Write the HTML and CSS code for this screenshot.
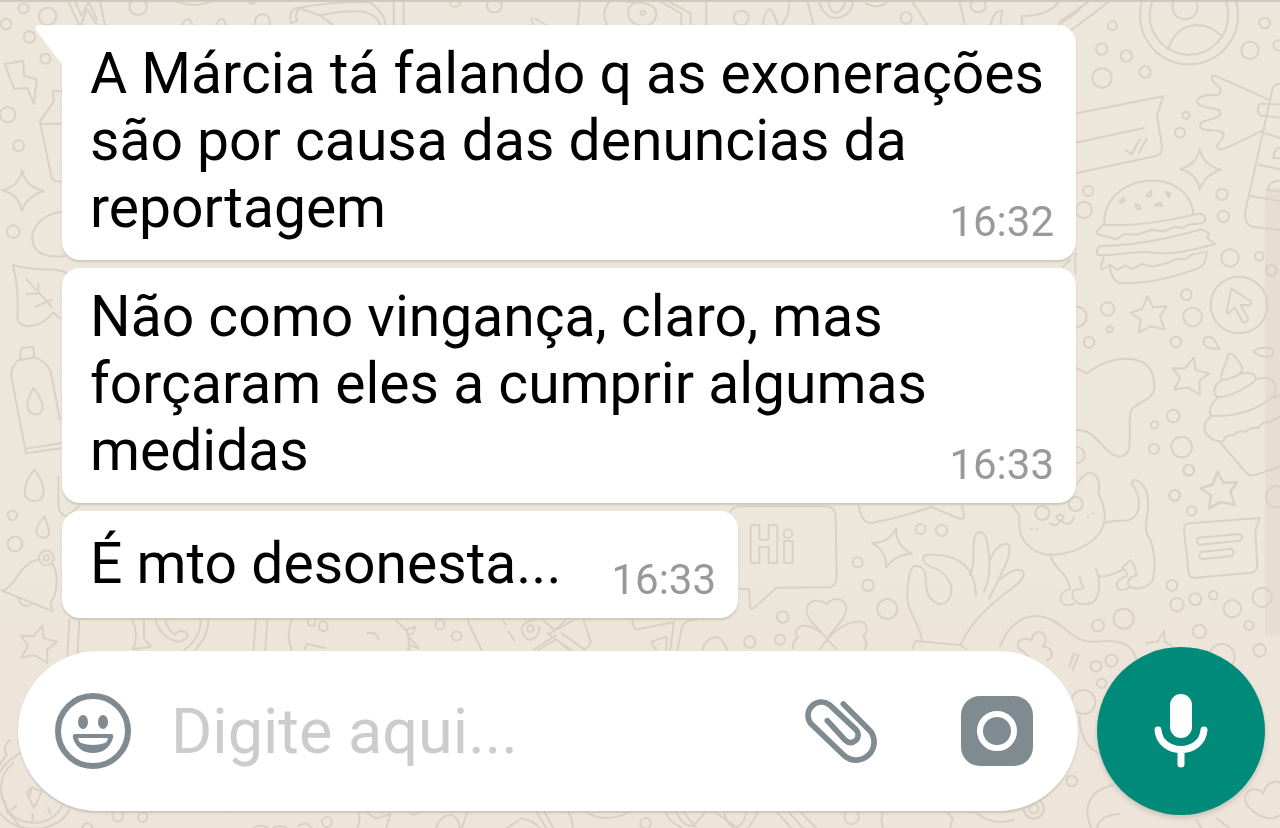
FILE: index.html
```html
<!DOCTYPE html>
<html lang="pt-BR">
<head>
  <meta charset="UTF-8" />
  <meta name="viewport" content="width=device-width, initial-scale=1.0"/>
  <title>Conversa</title>
  <link rel="stylesheet" href="styles.css">
</head>
<body>
  <!-- wallpaper doodles -->
  <svg class="wallpaper" viewBox="0 0 1280 828" preserveAspectRatio="xMinYMin slice" aria-hidden="true">
    <defs>
      <path id="star" d="M0-56 L17-22 L58-25 L38 6 L52 44 L10 35 L-26 54 L-20 15 L-51-6 L-15-17 Z"/>
      <path id="spark" d="M-3-62 Q8-12 62 0 Q14 14 -4 60 Q-10 12 -62-2 Q-12-14 -3-62 Z"/>
    </defs>
    <rect class="band" x="1265" y="188" width="15" height="448"/>
    <!-- right, top -->
    <g transform="translate(1060 0) scale(.3333)">
      <path d="M0 65 L100-5 M32 92 L160-5"/>
      <circle cx="387" cy="46" r="147"/><circle cx="387" cy="46" r="118"/><circle cx="375" cy="20" r="38"/>
      <path d="M325 148 C350 65 430 55 485 108"/>
      <circle cx="157" cy="77" r="13"/><circle cx="125" cy="147" r="17"/><circle cx="199" cy="168" r="17"/>
      <circle cx="126" cy="234" r="29"/><circle cx="255" cy="216" r="17"/><circle cx="614" cy="69" r="16"/>
      <circle cx="570" cy="151" r="26"/><circle cx="655" cy="136" r="15"/>
      <path d="M40 342 L310 289 L291 345 L306 440 Q308 462 290 467 L40 521 M40 430 L252 384"/>
      <path d="M198 452 L214 462 L236 424 M216 462 L240 418 M236 460 L260 416"/>
      <circle cx="378" cy="346" r="11"/><circle cx="360" cy="398" r="15"/>
      <path d="M625 298 L470 229 C450 220 450 240 468 252 C490 268 485 286 460 286 C430 280 405 298 413 310 C425 330 482 318 482 340 C480 362 420 355 420 376 C422 400 480 385 490 400 C500 420 460 430 475 446 C482 453 500 445 615 388"/>
      <path d="M660 252 Q640 250 636 275 L556 635 Q552 672 575 680 L660 690 M660 313 L605 311 C590 315 590 340 605 347 L660 353 M615 400 L660 414 M597 494 L660 508 M573 588 L660 604 M660 442 Q642 448 640 474 L660 474 M660 542 Q628 542 622 570 L660 574"/>
      <use href="#spark" x="422" y="509"/>
      <circle cx="85" cy="573" r="15"/><circle cx="72" cy="630" r="24"/><circle cx="486" cy="583" r="17"/><circle cx="490" cy="649" r="17"/>
      <path d="M133 674 C125 520 380 490 400 640 M133 674 C220 680 330 662 415 641 C440 640 440 665 425 670 L382 675 L370 684 L345 680 L310 694 L275 690 L230 704 L192 702 L170 718 L110 702 Q112 684 133 674"/>
      <path d="M122 738 C220 738 330 715 425 688 L448 700 L442 714 L465 732 C400 750 330 768 260 756 C200 755 160 770 112 764 Q108 745 122 738 M132 768 Q118 805 126 808 L152 795 L172 810 L196 796 L215 808 L245 792 L280 800 L320 790 L350 776 L376 778 L395 764 L440 755 Q440 790 420 802 Q300 850 190 850 Q155 850 150 800"/>
      <path d="M178 604 l12-10 4 8 -10 8z M226 612 l12 4 4 12 -12-2z M260 586 l14-14 0 14 -8 4z M284 616 l16-8 8 10z M316 576 l14 2 -2 14z"/>
      <circle cx="510" cy="774" r="26"/><circle cx="598" cy="769" r="13"/><circle cx="634" cy="810" r="16"/>
      <path d="M48 760 Q42 790 48 820 M30 780 L10 800"/>
    </g>
    <!-- right, middle -->
    <g transform="translate(1060 270) scale(.3333)">
      <circle cx="50" cy="140" r="30"/><circle cx="143" cy="117" r="20"/><circle cx="149" cy="178" r="9"/><circle cx="87" cy="217" r="16"/>
      <circle cx="379" cy="74" r="16"/><circle cx="398" cy="141" r="28"/><circle cx="348" cy="216" r="16"/>
      <use href="#star" x="262" y="134"/>
      <circle cx="537" cy="105" r="85"/>
      <path d="M514 56 L576 96 L568 106 L542 104 L565 148 Q558 162 548 156 L524 112 L506 130 Q500 132 501 120 Z"/>
      <path d="M430 214 C430 195 460 200 464 212 L478 236 C455 238 430 232 430 214 M580 244 C600 228 640 230 640 246 C640 266 605 266 580 244"/>
      <use href="#star" transform="translate(384 316) rotate(18)"/>
      <path d="M40 290 L82 310 C130 270 200 255 245 275 C275 290 285 320 283 358 C275 395 215 400 211 428 C203 500 225 555 178 560 C130 555 110 475 50 480"/>
      <circle cx="340" cy="438" r="19"/><circle cx="284" cy="465" r="11"/><circle cx="282" cy="537" r="15"/><circle cx="365" cy="531" r="31"/><circle cx="386" cy="601" r="16"/><circle cx="344" cy="676" r="16"/><circle cx="50" cy="555" r="24"/>
      <path d="M484 326 C480 305 505 275 503 256 C515 240 530 265 546 290 C555 315 510 325 484 332 M484 332 C460 345 455 375 475 382 C510 380 570 350 588 328 C585 300 550 305 520 322 M470 386 C445 410 445 435 460 438 C540 440 600 415 644 376 C655 340 635 315 590 328 M452 440 C425 460 430 490 450 502 C465 515 480 515 490 512 Q500 492 520 496 Q536 478 556 486 Q572 470 596 474 Q606 454 628 456 L660 440 M480 516 L560 610 Q570 620 590 614 L660 590 M644 384 L665 372"/>
      <use href="#star" x="472" y="660"/>
      <circle cx="650" cy="680" r="32"/><circle cx="634" cy="2" r="16"/>
    </g>
    <!-- cat and card -->
    <g transform="translate(1000 470) scale(.3333)">
      <path d="M232 42 Q250 8 272 8 C300 15 300 45 296 72 C318 120 325 160 290 200 C240 250 150 268 105 242 C60 215 55 180 58 135 L35 104"/>
      <circle cx="127" cy="129" r="21"/><circle cx="227" cy="102" r="21"/>
      <path d="M168 140 Q180 128 192 140 Q186 154 178 152 Z M180 152 Q170 176 150 160 M182 152 Q212 175 222 140 M92 176 h3 M110 178 h3 M262 142 h3 M278 130 h3"/>
      <path d="M318 158 C345 150 375 155 392 148 C425 130 425 80 395 42 C395 20 425 30 440 65 C455 110 430 165 440 190 C460 220 470 270 460 325 C450 360 390 360 385 345 C380 325 400 315 410 318 L404 290 L392 270 L368 292 L382 312 M152 260 C165 300 205 310 211 358 C180 360 170 400 200 406 L222 402 M288 296 C305 340 300 400 262 402 C220 410 210 370 222 360 L250 355 M250 355 L238 320 M298 318 C330 322 355 305 370 298 M380 318 C350 325 340 355 362 360 Q375 362 388 352"/>
      <use href="#star" transform="translate(654 62)"/>
      <circle cx="524" cy="76" r="16"/><circle cx="575" cy="123" r="14"/><circle cx="567" cy="0" r="16"/>
      <path d="M552 178 Q552 160 570 160 L780 144 L766 180 L772 290 Q770 306 755 308 L585 323 Q568 322 566 310 Z M596 203 L718 192 Q734 200 720 212 L598 224 Q584 214 596 203 M604 246 L694 236 Q708 246 696 258 L606 268 Q590 256 604 246"/>
      <circle cx="516" cy="346" r="16"/><circle cx="531" cy="404" r="20"/><circle cx="586" cy="388" r="18"/><circle cx="640" cy="376" r="13"/><circle cx="697" cy="416" r="26"/><circle cx="787" cy="382" r="29"/><circle cx="747" cy="466" r="14"/><circle cx="598" cy="484" r="20"/><circle cx="371" cy="446" r="30"/><circle cx="294" cy="467" r="18"/><circle cx="779" cy="541" r="19"/><circle cx="666" cy="560" r="38"/>
      <path d="M0 530 C30 450 90 420 155 450 C200 470 220 520 290 515 C370 505 400 530 410 570"/>
      <path d="M55 535 C45 505 80 505 95 510 C100 480 130 480 136 500 C142 520 130 525 128 530 C160 530 165 565 140 570 M55 535 Q80 550 95 570 M208 590 L222 550 L236 556 L218 600"/>
      <path d="M440 520 L474 514 L492 482 L494 514 L516 528"/>
      <circle cx="334" cy="572" r="18"/><circle cx="288" cy="589" r="16"/><circle cx="305" cy="640" r="14"/><circle cx="250" cy="696" r="36"/>
      <path d="M238 740 C240 800 265 840 300 850 M625 600 Q640 620 640 640"/>
    </g>
    <!-- bubble, hand, clover -->
    <g transform="translate(730 495) scale(.3333)">
      <path d="M0 50 Q10 34 30 34 L290 34 Q315 36 317 65 L320 245 Q320 275 295 277 L140 278 L82 330 Q62 350 60 335 L58 282 L20 282"/>
      <path d="M62 90 H88 V134 H116 V90 H142 V204 H116 V156 H88 V204 H62 Z M162 138 H188 V204 H162 Z"/>
      <circle cx="174" cy="116" r="13"/>
      <path d="M385 30 Q395 85 425 84 Q510 68 605 36 L690 72 Q705 72 702 58 L695 30"/>
      <use href="#spark" transform="translate(486 161) rotate(14)"/>
      <circle cx="572" cy="102" r="15"/><circle cx="635" cy="106" r="17"/><circle cx="383" cy="202" r="15"/><circle cx="414" cy="271" r="17"/><circle cx="472" cy="342" r="30"/><circle cx="158" cy="366" r="17"/><circle cx="59" cy="441" r="17"/><circle cx="150" cy="434" r="15"/>
      <path d="M576 438 C570 385 530 350 532 300 C532 260 540 215 555 213 C605 210 575 275 598 305 Q625 340 650 320 C680 285 660 245 620 222 C580 210 570 190 588 180 C650 175 735 190 738 302 M720 240 C742 200 720 145 738 118 C750 105 765 112 770 135 C780 190 785 240 762 290 M780 195 C790 165 815 140 835 148 C850 170 825 215 778 310 M812 252 C840 228 865 218 880 230 C890 250 855 275 825 295 C770 340 725 380 692 448 M548 460 L556 438 L690 450 L710 462"/>
      <path d="M292 434 C270 400 225 375 230 340 C235 315 270 310 289 328 C310 300 355 310 348 350 C335 390 305 400 292 434 C325 390 380 370 405 385 C415 405 410 415 400 425 Q415 445 405 462 M292 434 C270 400 215 375 198 408 Q196 422 205 428 Q185 440 190 460 M292 434 L270 462 M292 434 L320 462"/>
    </g>
    <!-- left edge -->
    <g transform="scale(.3333)">
      <circle cx="71" cy="25" r="15"/><circle cx="18" cy="72" r="16"/><circle cx="143" cy="49" r="26"/><circle cx="88" cy="111" r="17"/><circle cx="136" cy="176" r="15"/><circle cx="23" cy="344" r="23"/><circle cx="56" cy="437" r="16"/><circle cx="40" cy="695" r="19"/>
      <path d="M14 192 L70 183 L72 228 L110 238 L102 312 L82 264 L42 266 Z M205 5 L240 80 L262 28 L290 72 M225 5 L245 48 L265 5 L292 60"/>
      <path d="M190 272 L158 274 L162 302 L120 365 L155 535 Q162 546 190 545 M120 371 L190 371 M185 635 C110 645 75 710 110 750 Q135 775 195 768"/>
      <use href="#spark" x="69" y="573"/>
      <path d="M52 960 Q58 860 38 794 C100 820 160 795 205 822 M52 960 Q60 980 90 978 Q130 975 160 938 L180 955 M80 838 L155 920 M115 880 V850 M80 882 L118 880 M105 920 L155 900"/>
      <path d="M62 1074 Q58 1050 66 1045 L100 1040 L103 1072 L62 1080 M62 1076 Q32 1095 34 1130 L78 1360 L182 1345 M78 1346 L182 1330 M103 1072 Q140 1085 152 1115 L180 1260"/>
      <path d="M100 1164 C130 1200 140 1240 108 1244 C70 1240 80 1200 100 1164 M103 1410 C135 1450 145 1500 103 1504 C60 1500 70 1450 103 1410 M133 1550 C150 1590 155 1610 130 1614 C95 1605 110 1575 133 1550"/>
      <circle cx="37" cy="1546" r="14"/><circle cx="45" cy="1632" r="22"/><circle cx="139" cy="1674" r="22"/><circle cx="139" cy="1674" r="8"/>
      <path d="M118 1678 C55 1690 50 1760 6 1772 L158 1834 L152 1806 C175 1780 175 1720 158 1692 M55 1794 Q65 1830 98 1812 M175 1430 V1520 Q180 1545 200 1550 L235 1520"/>
      <use href="#star" transform="translate(108 1930) rotate(20)"/>
      <path d="M208 1860 L202 1970 M238 1860 L232 1970"/>
    </g>
    <!-- strip above the first message -->
    <g transform="translate(100 0) scale(.625 .3333)">
      <path d="M0 5 L8 75 M122 5 Q150 25 178 5 M236 5 L244 12 L250 5 M306 70 Q300 30 316 24 Q370 5 430 5 Q452 30 458 75 M306 70 L316 62 Q310 50 318 24 L352 46 L372 74 M352 46 Q400 28 424 36 Q446 50 448 75 M470 5 V75 M486 5 V75 M768 5 L764 75 M815 5 Q800 40 812 75 M842 5 Q890 5 890 38 Q890 75 868 78 Q845 70 845 38 Q845 15 860 5 M897 5 L930 40 V75 M910 5 L945 40 V75 M970 5 V75 M1060 75 Q1070 -20 1084 75 M1102 5 Q1105 45 1090 75 M1132 5 L1142 75 M1150 5 Q1160 55 1176 54 Q1202 50 1205 5 M1165 5 Q1170 40 1178 38 Q1190 30 1192 5 M1225 10 Q1245 30 1260 5 M1300 5 L1324 75 M1375 5 L1384 75 M1425 75 Q1430 30 1444 32 L1440 75 M1475 75 V48 Q1515 50 1535 5 M1530 80 L1568 30 M132 75 Q140 38 148 75 M186 75 Q194 38 202 75 M690 55 L694 75 M696 55 L714 75"/>
      <ellipse cx="61" cy="20" rx="14" ry="25"/><ellipse cx="260" cy="65" rx="12" ry="22"/><ellipse cx="568" cy="8" rx="8" ry="12"/><ellipse cx="631" cy="17" rx="12" ry="20"/><ellipse cx="869" cy="38" rx="4" ry="6"/><ellipse cx="1026" cy="54" rx="12" ry="22"/><ellipse cx="1290" cy="54" rx="9" ry="17"/><ellipse cx="1405" cy="17" rx="12" ry="20"/>
    </g>
    <!-- strip between the last message and the input -->
    <g transform="translate(0 600) scale(.472 .3333)">
      <path d="M280 60 Q295 105 282 148 L320 140 L305 116 V60 M330 60 Q340 115 378 125 Q405 115 394 96 L382 92 L370 104 Q355 90 350 60 M425 60 Q425 115 390 150 M442 60 Q440 115 412 150 M542 60 L537 150 M566 60 L562 150 M618 60 Q605 105 618 150 M645 148 L650 132 L690 144 M652 60 Q650 80 666 78 L668 62 M778 100 Q798 92 802 120 M838 60 L860 90 L880 80 L876 100 L862 104 L888 145 L866 135 V150 M860 90 Q870 110 864 150 M990 60 L1020 150 M1065 60 L1072 75 M1078 95 L1090 122 M1135 60 Q1110 62 1105 85 Q1108 115 1124 120 Q1145 110 1142 80 M1150 60 L1175 90 L1200 60 M1165 100 L1215 60 M1160 100 L1210 150 M1130 150 L1178 106 M1140 150 L1178 118 L1205 150 M1236 60 L1252 125 Q1250 140 1238 148 L1190 100 M1340 60 Q1340 90 1352 88 L1428 66 L1420 150 M1380 125 L1412 110 V150 M1380 125 L1390 150 M1475 60 Q1450 60 1445 80 L1435 150 M1488 150 Q1495 112 1520 112 Q1535 120 1540 150"/>
      <ellipse cx="685" cy="79" rx="9" ry="15"/><ellipse cx="932" cy="74" rx="10" ry="14"/><ellipse cx="967" cy="108" rx="10" ry="14"/><ellipse cx="1124" cy="86" rx="7" ry="10"/>
    </g>
    <!-- bottom edge -->
    <g transform="translate(0 740) scale(.3333)">
      <path d="M30 0 Q5 20 20 45 Q-10 80 -10 110 M5 170 Q20 190 20 215 Q45 235 60 262 M80 158 L96 142 L125 155 L102 204 Z M96 142 L90 165 M35 210 L50 196 M98 240 V222 M152 222 L144 204"/>
      <path d="M40 70 C-15 110 -5 200 50 235 C110 265 165 240 185 200 M60 40 C-40 90 -40 220 45 255 C120 285 190 250 208 210"/>
      <circle cx="353" cy="228" r="16"/><circle cx="428" cy="232" r="14"/><circle cx="262" cy="266" r="16"/><circle cx="981" cy="246" r="15"/><circle cx="1242" cy="206" r="18"/><circle cx="1937" cy="250" r="16"/><circle cx="2555" cy="230" r="22"/>
      <path d="M670 210 Q695 218 720 210 M762 262 Q785 252 805 264 M820 264 Q840 252 860 264 M895 258 Q920 240 935 265 M1072 210 Q1085 235 1072 265 M1090 210 L1128 236 L1172 222 L1158 265 M1308 265 Q1320 225 1355 225 Q1375 232 1380 265 M1405 210 L1385 265 M1520 265 L1555 242 M1560 235 Q1600 240 1620 265 M1605 210 L1640 265 M1630 210 L1660 265 M1700 210 Q1720 235 1718 265 M1755 215 Q1820 255 1895 212 M1995 215 Q2010 250 2045 262 M2030 215 Q2045 260 2080 258 L2120 212 M2050 215 L2090 265 M2140 212 L2210 262 Q2235 250 2240 212 M2170 212 Q2180 250 2200 262 M2275 215 Q2260 245 2245 262 M2330 215 L2375 265 M2365 215 L2410 265 M2400 215 L2450 265 M2650 215 Q2640 240 2650 265 M2840 215 L2858 235 L2850 265 M2925 215 Q2980 260 3040 240"/>
      <circle cx="3102" cy="206" r="30"/><circle cx="3102" cy="206" r="14"/><circle cx="3216" cy="123" r="16"/>
      <path d="M3340 135 C3270 150 3245 200 3275 265 M3290 265 Q3300 225 3360 222 M3840 225 C3800 255 3735 205 3735 175 C3740 140 3780 145 3790 160 C3800 125 3835 115 3845 135 M3590 240 L3605 265 M3650 235 L3690 265"/>
    </g>
  </svg>

  <main class="chat">
    <ol class="messages">
      <li class="bubble">
        <svg class="tail" viewBox="0 0 28 40" aria-hidden="true"><path d="M28 0 H4 Q-1 0 1 5 L26 38 H28 Z"/></svg>
        <p>A Márcia tá falando q as exonerações são por causa das denuncias da reportagem</p>
        <time>16:32</time>
      </li>
      <li class="bubble">
        <p>Não como vingança, claro, mas forçaram eles a cumprir algumas medidas</p>
        <time>16:33</time>
      </li>
      <li class="bubble short">
        <p>É mto desonesta...</p>
        <time>16:33</time>
      </li>
    </ol>

    <form class="composer">
      <div class="field">
        <button type="button" class="icon" aria-label="Emoji">
          <svg width="76" height="76" viewBox="0 0 76 76">
            <circle cx="38" cy="38" r="35" fill="none" stroke="#7f8b91" stroke-width="6"/>
            <ellipse cx="28" cy="29" rx="5" ry="7"/><ellipse cx="48" cy="29" rx="5" ry="7"/>
            <path fill-rule="evenodd" d="M20 41 H56 Q59 41 58 45 Q53 60 38 60 Q23 60 18 45 Q17 41 20 41 Z M23 45 Q23 48 26 50 Q38 54 50 50 Q53 48 53 45 Z"/>
          </svg>
        </button>
        <input type="text" placeholder="Digite aqui..." aria-label="Digite aqui">
        <button type="button" class="icon" aria-label="Anexar">
          <svg width="74" height="68" viewBox="72 171 222 204">
            <path class="clip" d="M190 192 L270 272 A54 54 0 0 1 194 348 L92 250 A40 40 0 0 1 148 194 L228 269 A22 22 0 0 1 196 301 L142 242"/>
          </svg>
        </button>
        <button type="button" class="icon camera" aria-label="Câmera">
          <svg width="72" height="70" viewBox="0 0 72 70">
            <rect width="72" height="70" rx="19"/>
            <circle cx="36" cy="35" r="17" fill="none" stroke="#fff" stroke-width="6"/>
          </svg>
        </button>
      </div>
      <button type="button" class="mic" aria-label="Gravar áudio">
        <svg width="54" height="74" viewBox="0 0 54 74">
          <rect x="16" y="0" width="22" height="44" rx="11"/>
          <path d="M4 36 C6 62 48 62 50 36 M27 57 V70"/>
        </svg>
      </button>
    </form>
  </main>
</body>
</html>
```
FILE: styles.css
```css
* {
    box-sizing: border-box;
}
body {
    margin: 0;
    min-height: 100vh;
    font-family: Roboto, sans-serif;
    background: linear-gradient(#ede6da 70%, #ede4da 80%);
    border-top: 2px solid #cfc8c0;
}
.wallpaper {
    position: fixed;
    inset: 0;
    width: 100%;
    height: 100%;
    z-index: -1;
    fill: none;
    stroke: #d9d1c5;
    stroke-linejoin: round;
    stroke-linecap: round;
}
.wallpaper path,
.wallpaper circle,
.wallpaper ellipse {
    stroke-width: 2px;
    vector-effect: non-scaling-stroke;
}
.wallpaper .band {
    fill: #e6ded2;
    stroke: none;
}
.chat {
    padding-top: 23px;
}
.messages {
    list-style: none;
    margin: 0;
    padding: 0 204px 0 62px;
    display: flex;
    flex-direction: column;
    align-items: flex-start;
    gap: 8px;
}
.bubble {
    position: relative;
    display: grid;
    width: 100%;
    padding: 15px 22px 19px 28px;
    background: #fff;
    border-radius: 18px;
    box-shadow: 0 2px 2px #cdc8b8;
}
.bubble:first-child {
    border-top-left-radius: 0;
}
.bubble p {
    margin: 0;
    grid-area: 1 / 1;
    font-size: 57px;
    line-height: 67px;
    color: #000;
}
.bubble time {
    grid-area: 1 / 1;
    align-self: end;
    justify-self: end;
    font-size: 42px;
    line-height: 38px;
    color: #999;
}
.bubble.short {
    width: auto;
    grid-template-columns: auto auto;
    column-gap: 50px;
    min-height: 107px;
    padding-top: 19px;
}
.bubble.short time {
    grid-area: 1 / 2;
}
.tail {
    position: absolute;
    top: 0;
    left: -27px;
    width: 28px;
    height: 40px;
    fill: #fff;
}
.composer {
    display: flex;
    align-items: center;
    gap: 19px;
    margin-top: 29px;
    padding: 0 15px 0 18px;
}
.field {
    flex: 1;
    display: flex;
    align-items: center;
    min-width: 0;
    height: 160px;
    padding: 0 45px 0 37px;
    background: #fff;
    border-radius: 80px;
    box-shadow: 0 2px 2px #cbc4ba;
}
.field input {
    flex: 1;
    min-width: 0;
    margin: 0 40px;
    padding: 0;
    border: none;
    outline: none;
    background: none;
    font-family: inherit;
    font-size: 63px;
    color: #000;
}
.field input::placeholder {
    color: #ccc;
}
.icon {
    display: flex;
    padding: 0;
    border: none;
    background: none;
    cursor: pointer;
    fill: #7f8b91;
}
.clip {
    fill: none;
    stroke: #7f8b91;
    stroke-width: 17px;
    stroke-linecap: round;
    stroke-linejoin: round;
}
.camera {
    margin-left: 83px;
}
.mic {
    display: flex;
    align-items: center;
    justify-content: center;
    width: 168px;
    height: 168px;
    padding: 0;
    border: none;
    border-radius: 50%;
    background: #008a7a;
    box-shadow: 0 3px 5px #cbc4ba;
    cursor: pointer;
}
.mic rect {
    fill: #fff;
}
.mic path {
    fill: none;
    stroke: #fff;
    stroke-width: 7px;
    stroke-linecap: round;
}
```
